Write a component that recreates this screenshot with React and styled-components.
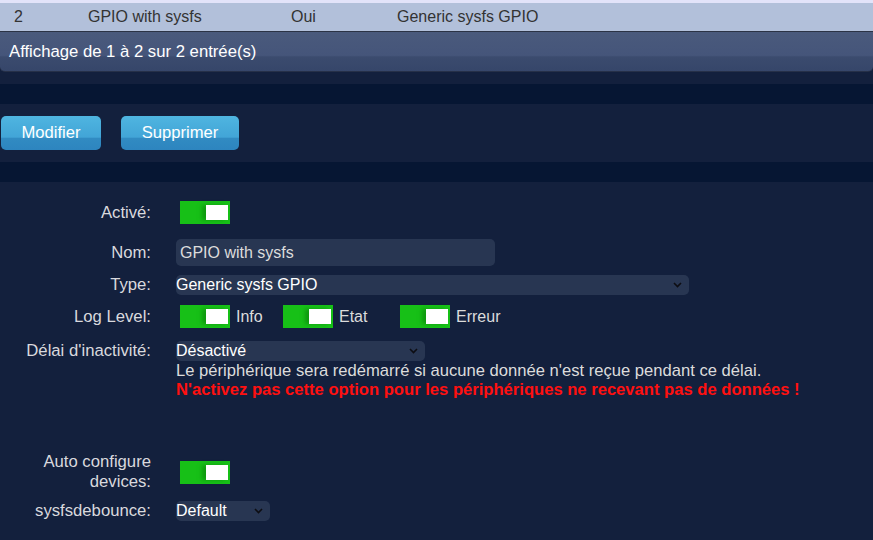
import React from "react";
import styled, { createGlobalStyle } from "styled-components";

const Global = createGlobalStyle`
  html, body { margin: 0; padding: 0; background: #13203d; }
  body { font-family: "Liberation Sans", Arial, sans-serif; }
  * { box-sizing: border-box; }
`;

const Page = styled.div`
  min-height: 540px;
  display: flex;
  flex-direction: column;
  gap: 20px;
  background: #061633;
`;

const Panel = styled.section`
  background: #13203d;
`;

const TablePanel = styled(Panel)`
  padding-bottom: 12px;
`;

const TopStrip = styled.div`
  height: 3px;
  background: #e2e3f9;
`;

const Row = styled.div`
  height: 29px;
  display: flex;
  align-items: center;
  background: #b2c0da;
  border-bottom: 1px solid #2b3345;
  color: #333;
  font-size: 16px;
`;

const Cell = styled.span`
  width: ${(p) => p.$w}px;
  padding-left: ${(p) => p.$pl || 0}px;
  white-space: nowrap;
`;

const Footer = styled.div`
  height: 40px;
  display: flex;
  align-items: center;
  padding-left: 9px;
  color: #fff;
  font-size: 16.7px;
  border-bottom: 1px solid #263048;
  border-radius: 0 0 5px 5px;
  background: linear-gradient(
    180deg,
    #4a5a7c 0%,
    #45557a 60%,
    #3b4b6e 64%,
    #36466a 100%
  );
`;

const ButtonPanel = styled(Panel)`
  display: flex;
  gap: 20px;
  padding: 12px 0 12px 1px;
`;

const Button = styled.button`
  width: ${(p) => p.$w}px;
  height: 34px;
  border: none;
  border-radius: 5px;
  color: #fff;
  font-family: "Liberation Sans", Arial, sans-serif;
  font-size: 16.6px;
  padding: 0;
  background: linear-gradient(
    180deg,
    #4fb5e0 0%,
    #42a5d7 62%,
    #318bc2 66%,
    #2d85bf 100%
  );
`;

const FormPanel = styled(Panel)`
  flex: 1;
  display: flex;
  flex-direction: column;
  padding-top: 19px;
  padding-bottom: 18px;
`;

const FormRow = styled.div`
  display: grid;
  grid-template-columns: 151px 1fr;
  column-gap: 25px;
  align-items: ${(p) => (p.$top ? "start" : "center")};
  margin-top: ${(p) => p.$mt || 0}px;
`;

const Label = styled.label`
  text-align: right;
  color: #d9d9de;
  font-size: 16.7px;
  line-height: 20px;
  white-space: nowrap;
`;

const Toggle = styled.span`
  width: 50px;
  height: 23px;
  margin-left: 4px;
  display: flex;
  justify-content: flex-end;
  align-items: center;
  padding-right: 2px;
  background: #17c017;
`;

const Knob = styled.span`
  width: 22px;
  height: 15px;
  background: #fff;
  box-shadow: -4px 0 4px rgba(10, 120, 10, 0.55);
`;

const Input = styled.div`
  width: 319px;
  height: 27px;
  border-radius: 5px;
  background: #283652;
  color: #dcdcdc;
  font-size: 16px;
  display: flex;
  align-items: center;
  padding-left: 4px;
`;

const Select = styled.div`
  width: ${(p) => p.$w}px;
  height: 20px;
  border-radius: 5px;
  background: #283652;
  color: #fff;
  font-size: 16px;
  display: flex;
  align-items: center;
  justify-content: space-between;
  padding-right: 7px;
  line-height: 20px;
`;

const LogGroup = styled.div`
  display: flex;
  align-items: center;
`;

const LogItem = styled.div`
  width: ${(p) => p.$w}px;
  display: flex;
  align-items: center;
  gap: 6px;
  color: #dcdcdc;
  font-size: 16px;
`;

const Stack = styled.div`
  display: flex;
  flex-direction: column;
`;

const Help = styled.div`
  color: #dcdcdc;
  font-size: 16.6px;
  line-height: 19px;
  white-space: nowrap;
`;

const Warning = styled(Help)`
  color: #ff1010;
  font-weight: bold;
`;

const Chevron = () => (
  <svg width="9" height="6" viewBox="0 0 9 6">
    <path d="M1 1l3.5 3.5L8 1" stroke="#0d0d12" strokeWidth="1.6" fill="none" />
  </svg>
);

const Sel = ({ w, children }) => (
  <Select $w={w}>
    <span>{children}</span>
    <Chevron />
  </Select>
);

const Switch = () => (
  <Toggle>
    <Knob />
  </Toggle>
);

export default function App() {
  return (
    <>
      <Global />
      <Page>
        <TablePanel>
          <TopStrip />
          <Row>
            <Cell $w={88} $pl={14}>2</Cell>
            <Cell $w={203}>GPIO with sysfs</Cell>
            <Cell $w={106}>Oui</Cell>
            <Cell $w={200}>Generic sysfs GPIO</Cell>
          </Row>
          <Footer>Affichage de 1 à 2 sur 2 entrée(s)</Footer>
        </TablePanel>

        <ButtonPanel>
          <Button $w={100}>Modifier</Button>
          <Button $w={118}>Supprimer</Button>
        </ButtonPanel>

        <FormPanel>
          <FormRow>
            <Label>Activé:</Label>
            <Switch />
          </FormRow>
          <FormRow $mt={15}>
            <Label>Nom:</Label>
            <Input>GPIO with sysfs</Input>
          </FormRow>
          <FormRow $mt={9}>
            <Label>Type:</Label>
            <Sel w={513}>Generic sysfs GPIO</Sel>
          </FormRow>
          <FormRow $mt={10}>
            <Label>Log Level:</Label>
            <LogGroup>
              <LogItem $w={103}>
                <Switch />
                Info
              </LogItem>
              <LogItem $w={117}>
                <Switch />
                Etat
              </LogItem>
              <LogItem $w={120}>
                <Switch />
                Erreur
              </LogItem>
            </LogGroup>
          </FormRow>
          <FormRow $mt={13} $top>
            <Label>Délai d'inactivité:</Label>
            <Stack>
              <Sel w={249}>Désactivé</Sel>
              <Help>
                Le périphérique sera redémarré si aucune donnée n'est reçue
                pendant ce délai.
              </Help>
              <Warning>
                N'activez pas cette option pour les périphériques ne recevant
                pas de données !
              </Warning>
            </Stack>
          </FormRow>
          <FormRow $mt={53}>
            <Label>
              Auto configure
              <br />
              devices:
            </Label>
            <Switch />
          </FormRow>
          <FormRow $mt={9}>
            <Label>sysfsdebounce:</Label>
            <Sel w={94}>Default</Sel>
          </FormRow>
        </FormPanel>
      </Page>
    </>
  );
}
